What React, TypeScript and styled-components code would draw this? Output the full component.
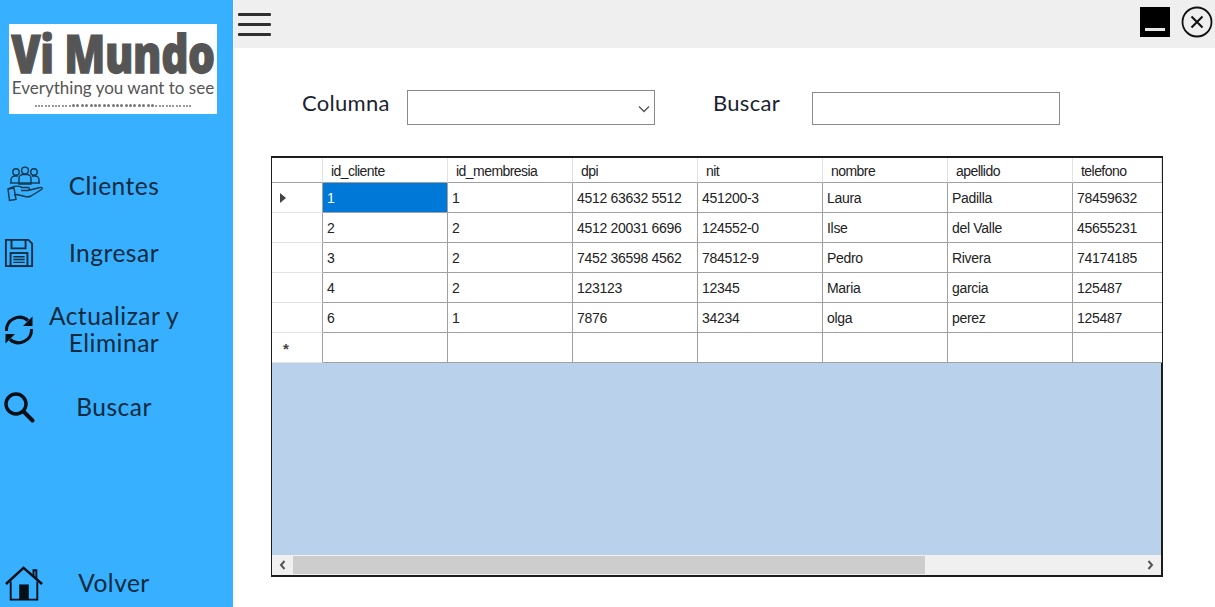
import React from 'react';
import styled, { createGlobalStyle } from 'styled-components';

const GlobalStyle = createGlobalStyle`
  html, body, #root {
    margin: 0;
    height: 100%;
    background: #fff;
  }
  * {
    box-sizing: border-box;
  }
`;

const columns = ['id_cliente', 'id_membresia', 'dpi', 'nit', 'nombre', 'apellido', 'telefono'];

const rows = [
  ['1', '1', '4512 63632 5512', '451200-3', 'Laura', 'Padilla', '78459632'],
  ['2', '2', '4512 20031 6696', '124552-0', 'Ilse', 'del Valle', '45655231'],
  ['3', '2', '7452 36598 4562', '784512-9', 'Pedro', 'Rivera', '74174185'],
  ['4', '2', '123123', '12345', 'Maria', 'garcia', '125487'],
  ['6', '1', '7876', '34234', 'olga', 'perez', '125487'],
  ['', '', '', '', '', '', ''],
];

const ClientsIcon = () => (
  <svg width="38" height="40" viewBox="0 0 38 40" fill="none" stroke="#10384f" strokeWidth="1.4">
    <circle cx="10" cy="6" r="3.2" />
    <circle cx="19" cy="4.5" r="3.4" />
    <circle cx="28" cy="6" r="3.2" />
    <path d="M5 17v-3.5c0-2 2-3.5 4-3.5h3M33 17v-3.5c0-2-2-3.5-4-3.5h-3" />
    <path d="M13 18v-6c0-2 2-3.5 4-3.5h4c2 0 4 1.500 4 3.500v6z" />
    <path d="M4 17h30" />
    <path d="M2 23l5-2c3-1.500 6-1 9 .5h6c2 0 2 3-.5 3H15M22 24.500l12-3c2-.5 3 .5 1.500 2L25 30c-2 1-4 1-6 .5l-8-2-3 .5" />
    <path d="M2 23l6-1 2 11.500-6.500 1z" />
  </svg>
);

const SaveIcon = () => (
  <svg width="30" height="30" viewBox="0 0 32 32" fill="none" stroke="#0d2c40" strokeWidth="2">
    <path d="M2 2h24l4 4v24H2z" />
    <path d="M8 2v9h15V2" />
    <rect x="7" y="16" width="18" height="14" />
    <path d="M10 20h12M10 23h12M10 26h12" strokeWidth="1.500" />
  </svg>
);

const RefreshIcon = () => (
  <svg width="32" height="32" viewBox="0 0 32 32" fill="none" stroke="#050f16" strokeWidth="3">
    <path d="M3.500 17A13 13 0 0 1 25 6.500" />
    <path d="M28.500 15A13 13 0 0 1 7 25.500" />
    <path d="M29.500 2.500v9.500h-9.500z" fill="#050f16" stroke="none" />
    <path d="M2.500 29.500V20h9.500z" fill="#050f16" stroke="none" />
  </svg>
);

const SearchIcon = () => (
  <svg width="32" height="32" viewBox="0 0 32 32" fill="none" stroke="#050f16">
    <circle cx="13" cy="13" r="10" strokeWidth="3.400" />
    <path d="M20.500 20.500l9 9" strokeWidth="4" strokeLinecap="round" />
  </svg>
);

const HomeIcon = () => (
  <svg width="38" height="35" viewBox="0 0 40 36" fill="none" stroke="#050f16">
    <path d="M1 18.500L19.500 1.500 39 18.500" strokeWidth="2.600" />
    <path d="M30 10V4h3v9" strokeWidth="2" />
    <path d="M6 16v19h28V16" strokeWidth="2" />
    <rect x="15" y="19" width="10" height="16" fill="#050f16" stroke="none" />
  </svg>
);

const App = () => {
  return (
    <>
      <GlobalStyle />
      <Page>
        <Sidebar>
          <Logo>
            <LogoTitle>Vi Mundo</LogoTitle>
            <LogoTagline>Everything you want to see</LogoTagline>
            <LogoDots>
              {Array.from({ length: 41 }).map((_, i) => (
                <LogoDot key={i} size={i > 10 && i < 30 ? 3 : 2} />
              ))}
            </LogoDots>
          </Logo>

          <NavItem height={67} first>
            <NavIcon offset={6}><ClientsIcon /></NavIcon>
            <NavLabel>Clientes</NavLabel>
          </NavItem>
          <NavItem height={67}>
            <NavIcon offset={4}><SaveIcon /></NavIcon>
            <NavLabel>Ingresar</NavLabel>
          </NavItem>
          <NavItem height={87}>
            <NavIcon offset={3}><RefreshIcon /></NavIcon>
            <NavLabel>Actualizar y<br />Eliminar</NavLabel>
          </NavItem>
          <NavItem height={67}>
            <NavIcon offset={3}><SearchIcon /></NavIcon>
            <NavLabel>Buscar</NavLabel>
          </NavItem>
          <NavItem height={48} pinned>
            <NavIcon offset={5}><HomeIcon /></NavIcon>
            <NavLabel>Volver</NavLabel>
          </NavItem>
        </Sidebar>

        <Main>
          <TopBar>
            <Hamburger>
              <HamburgerLine />
              <HamburgerLine />
              <HamburgerLine />
            </Hamburger>
            <WindowButtons>
              <MinimizeButton><MinimizeBar /></MinimizeButton>
              <svg width="32" height="32" viewBox="0 0 32 32" fill="none" stroke="#111">
                <circle cx="16" cy="16" r="14.500" strokeWidth="1.800" />
                <path d="M10.500 10.500l11 11M21.500 10.500l-11 11" strokeWidth="2" />
              </svg>
            </WindowButtons>
          </TopBar>

          <FilterRow>
            <FilterLabel width={105}>Columna</FilterLabel>
            <SelectBox>
              <svg width="12" height="8" viewBox="0 0 12 8" fill="none" stroke="#555" strokeWidth="1.300">
                <path d="M1 1.500l5 5 5-5" />
              </svg>
            </SelectBox>
            <FilterLabel width={99} leading={58}>Buscar</FilterLabel>
            <SearchInput readOnly />
          </FilterRow>

          <DataGrid>
            <GridRows>
              <HeaderCorner />
              {columns.map((col) => (
                <ColumnHeader key={col}>{col}</ColumnHeader>
              ))}
              {rows.map((row, r) => (
                <React.Fragment key={r}>
                  <RowHeader>
                    {r === 0 && <CurrentRowArrow />}
                    {r === rows.length - 1 && <NewRowMark>*</NewRowMark>}
                  </RowHeader>
                  {row.map((value, c) => (
                    <Cell key={c} selected={r === 0 && c === 0}>{value}</Cell>
                  ))}
                </React.Fragment>
              ))}
            </GridRows>
            <EmptyArea />
            <ScrollBar>
              <ScrollArrow>
                <svg width="7" height="10" viewBox="0 0 7 10" fill="none" stroke="#555" strokeWidth="2">
                  <path d="M5.500 1L2 5l3.500 4" />
                </svg>
              </ScrollArrow>
              <ScrollTrack>
                <ScrollThumb />
              </ScrollTrack>
              <ScrollArrow>
                <svg width="7" height="10" viewBox="0 0 7 10" fill="none" stroke="#555" strokeWidth="2">
                  <path d="M1.500 1L5 5 1.500 9" />
                </svg>
              </ScrollArrow>
            </ScrollBar>
          </DataGrid>
        </Main>
      </Page>
    </>
  );
};

export default App;

const Page = styled.div`
  display: flex;
  width: 1215px;
  height: 607px;
  overflow: hidden;
  background: #fff;
`;

const Sidebar = styled.aside`
  width: 233px;
  flex: none;
  display: flex;
  flex-direction: column;
  background: #36b0ff;
  padding-top: 24px;
`;

const Logo = styled.div`
  width: 208px;
  height: 90px;
  margin-left: 9px;
  padding-top: 9px;
  background: #fff;
  display: flex;
  flex-direction: column;
  align-items: center;
  color: #555;
`;

const LogoTitle = styled.div`
  font-family: "Open Sans", sans-serif;
  font-weight: 800;
  font-size: 42.500px;
  line-height: 40px;
  letter-spacing: -0.4px;
  white-space: nowrap;
  -webkit-text-stroke: 1px #555;
  transform: scaleY(1.25);
`;

const LogoTagline = styled.div`
  font-family: "Lato", sans-serif;
  font-size: 17px;
  line-height: 17px;
  margin-top: 6px;
  white-space: nowrap;
`;

const LogoDots = styled.div`
  display: flex;
  align-items: center;
  gap: 1.400px;
  margin-top: 8px;
`;

const LogoDot = styled.span<{ size: number }>`
  width: ${(p) => p.size}px;
  height: ${(p) => p.size}px;
  border-radius: 50%;
  background: #777;
`;

const NavItem = styled.div<{ height: number; first?: boolean; pinned?: boolean }>`
  height: ${(p) => p.height}px;
  flex: none;
  display: grid;
  grid-template-columns: 46px 136px;
  align-items: center;
  margin-top: ${(p) => (p.first ? '38.500px' : p.pinned ? 'auto' : '0')};
`;

const NavIcon = styled.div<{ offset: number }>`
  display: flex;
  align-items: center;
  padding-left: ${(p) => p.offset}px;
`;

const NavLabel = styled.div`
  font-family: "Lato", sans-serif;
  font-size: 24.500px;
  line-height: 27px;
  font-weight: 400;
  letter-spacing: 0.5px;
  color: #0e2a3d;
  text-align: center;
  white-space: nowrap;
  padding-bottom: 2px;
`;

const Main = styled.main`
  flex: 1;
  min-width: 0;
  display: flex;
  flex-direction: column;
`;

const TopBar = styled.header`
  height: 48px;
  flex: none;
  margin-left: 1px;
  background: #efefef;
  display: flex;
  align-items: flex-start;
  justify-content: space-between;
  padding: 6px 2px 0 4px;
`;

const Hamburger = styled.div`
  width: 33px;
  display: flex;
  flex-direction: column;
  gap: 7px;
  padding-top: 7px;
`;

const HamburgerLine = styled.span`
  height: 3px;
  background: #2f2f2f;
  border-radius: 1px;
`;

const WindowButtons = styled.div`
  display: flex;
  align-items: flex-start;
  gap: 11px;
`;

const MinimizeButton = styled.div`
  width: 30px;
  height: 30px;
  margin-top: 1px;
  background: #000;
  display: flex;
  align-items: flex-end;
  justify-content: center;
  padding-bottom: 6px;
`;

const MinimizeBar = styled.span`
  width: 20px;
  height: 3px;
  background: #e6e6e6;
`;

const FilterRow = styled.div`
  display: flex;
  align-items: flex-start;
  padding: 42px 0 0 69px;
  height: 77px;
  flex: none;
`;

const FilterLabel = styled.div<{ width: number; leading?: number }>`
  width: ${(p) => p.width}px;
  margin-left: ${(p) => p.leading || 0}px;
  font-family: "Lato", sans-serif;
  font-size: 22px;
  font-weight: 400;
  letter-spacing: 0.3px;
  line-height: 26px;
  color: #1b2330;
  white-space: nowrap;
`;

const SelectBox = styled.div`
  width: 248px;
  height: 35px;
  border: 1px solid #8a8a8a;
  background: #fff;
  display: flex;
  align-items: center;
  justify-content: flex-end;
  padding: 3px 4px 0 0;
`;

const SearchInput = styled.input`
  width: 248px;
  height: 33px;
  margin-top: 2px;
  border: 1px solid #8a8a8a;
  background: #fff;
  outline: none;
`;

const DataGrid = styled.section`
  width: 892px;
  height: 421px;
  margin: 31px 0 0 38px;
  border: 2px solid #1c1c1c;
  border-width: 2px 2px 2px 1px;
  display: flex;
  flex-direction: column;
  font-family: "Liberation Sans", Arial, sans-serif;
  font-size: 14px;
  letter-spacing: -0.3px;
  color: #222;
`;

const GridRows = styled.div`
  display: grid;
  grid-template-columns: 51px repeat(6, 125px) 89px;
  grid-template-rows: 25px repeat(6, 30px);
  flex: none;
`;

const HeaderCorner = styled.div`
  border-right: 1px solid #e2e2e2;
  border-bottom: 1px solid #a0a0a0;
`;

const ColumnHeader = styled.div`
  display: flex;
  align-items: center;
  padding: 2px 0 0 8px;
  letter-spacing: -0.55px;
  border-right: 1px solid #e2e2e2;
  border-bottom: 1px solid #a0a0a0;
  &:last-of-type {
    border-right: none;
  }
`;

const RowHeader = styled.div`
  position: relative;
  display: flex;
  align-items: center;
  padding-left: 8px;
  border-right: 1px solid #a0a0a0;
  border-bottom: 1px solid #e2e2e2;
`;

const CurrentRowArrow = styled.span`
  width: 0;
  height: 0;
  margin-top: 1px;
  border-style: solid;
  border-width: 5px 0 5px 6px;
  border-color: transparent transparent transparent #444;
`;

const NewRowMark = styled.span`
  margin: 2px 0 0 3px;
  font-size: 15px;
  font-weight: 700;
  color: #444;
`;

const Cell = styled.div<{ selected?: boolean }>`
  display: flex;
  align-items: center;
  padding-left: 4px;
  white-space: nowrap;
  overflow: hidden;
  border-right: 1px solid #a0a0a0;
  border-bottom: 1px solid #a0a0a0;
  background: ${(p) => (p.selected ? '#0078d7' : '#fff')};
  color: ${(p) => (p.selected ? '#fff' : '#222')};
  &:nth-child(8n) {
    border-right: none;
  }
`;

const EmptyArea = styled.div`
  flex: 1;
  background: #b9d1ea;
`;

const ScrollBar = styled.div`
  height: 20px;
  flex: none;
  display: flex;
  background: #f0f0f0;
`;

const ScrollArrow = styled.div`
  width: 21px;
  flex: none;
  display: flex;
  align-items: center;
  justify-content: center;
`;

const ScrollTrack = styled.div`
  flex: 1;
  display: flex;
  align-items: stretch;
  padding: 1px 0;
`;

const ScrollThumb = styled.div`
  width: 632px;
  background: #cdcdcd;
`;
